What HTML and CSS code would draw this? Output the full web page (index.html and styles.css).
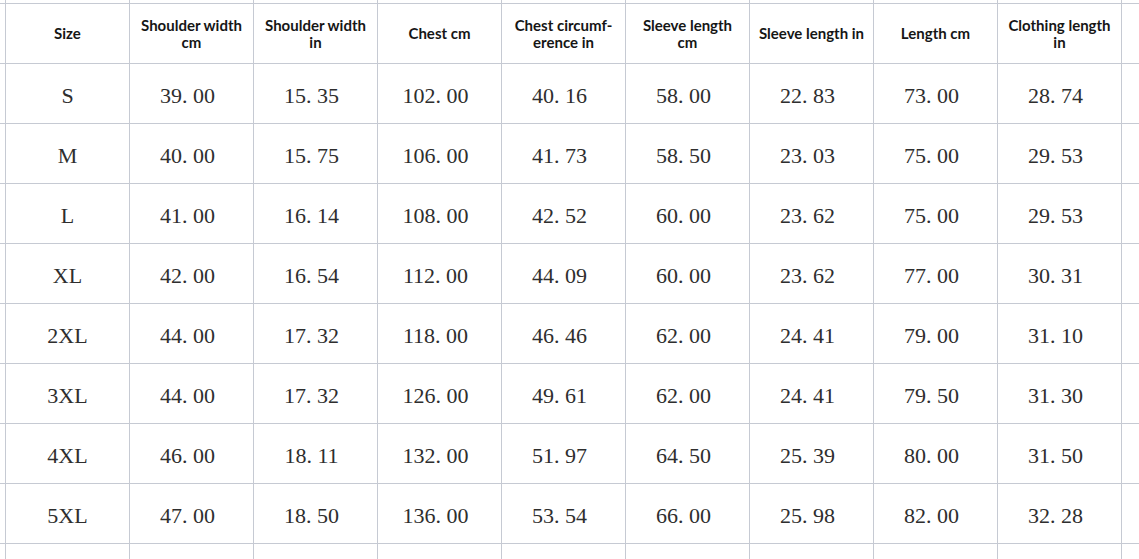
FILE: index.html
```html
<!DOCTYPE html>
<html lang="en">
<head>
<meta charset="utf-8">
<title>Size chart</title>
<link rel="stylesheet" href="styles.css">
</head>
<body>
<div class="sheet">
  <div class="c"></div><div class="c"></div><div class="c"></div><div class="c"></div><div class="c"></div><div class="c"></div><div class="c"></div><div class="c"></div><div class="c"></div><div class="c"></div><div class="c last"></div>

  <div class="c"></div>
  <div class="c h">Size</div>
  <div class="c h">Shoulder width<br>cm</div>
  <div class="c h">Shoulder width<br>in</div>
  <div class="c h">Chest cm</div>
  <div class="c h">Chest circumf-<br>erence in</div>
  <div class="c h">Sleeve length<br>cm</div>
  <div class="c h">Sleeve length in</div>
  <div class="c h">Length cm</div>
  <div class="c h">Clothing length<br>in</div>
  <div class="c last"></div>

  <div class="c"></div>
  <div class="c d">S</div>
  <div class="c d n">39<span class="dot">.</span>00</div>
  <div class="c d n">15<span class="dot">.</span>35</div>
  <div class="c d n">102<span class="dot">.</span>00</div>
  <div class="c d n">40<span class="dot">.</span>16</div>
  <div class="c d n">58<span class="dot">.</span>00</div>
  <div class="c d n">22<span class="dot">.</span>83</div>
  <div class="c d n">73<span class="dot">.</span>00</div>
  <div class="c d n">28<span class="dot">.</span>74</div>
  <div class="c last"></div>

  <div class="c"></div>
  <div class="c d">M</div>
  <div class="c d n">40<span class="dot">.</span>00</div>
  <div class="c d n">15<span class="dot">.</span>75</div>
  <div class="c d n">106<span class="dot">.</span>00</div>
  <div class="c d n">41<span class="dot">.</span>73</div>
  <div class="c d n">58<span class="dot">.</span>50</div>
  <div class="c d n">23<span class="dot">.</span>03</div>
  <div class="c d n">75<span class="dot">.</span>00</div>
  <div class="c d n">29<span class="dot">.</span>53</div>
  <div class="c last"></div>

  <div class="c"></div>
  <div class="c d">L</div>
  <div class="c d n">41<span class="dot">.</span>00</div>
  <div class="c d n">16<span class="dot">.</span>14</div>
  <div class="c d n">108<span class="dot">.</span>00</div>
  <div class="c d n">42<span class="dot">.</span>52</div>
  <div class="c d n">60<span class="dot">.</span>00</div>
  <div class="c d n">23<span class="dot">.</span>62</div>
  <div class="c d n">75<span class="dot">.</span>00</div>
  <div class="c d n">29<span class="dot">.</span>53</div>
  <div class="c last"></div>

  <div class="c"></div>
  <div class="c d">XL</div>
  <div class="c d n">42<span class="dot">.</span>00</div>
  <div class="c d n">16<span class="dot">.</span>54</div>
  <div class="c d n">112<span class="dot">.</span>00</div>
  <div class="c d n">44<span class="dot">.</span>09</div>
  <div class="c d n">60<span class="dot">.</span>00</div>
  <div class="c d n">23<span class="dot">.</span>62</div>
  <div class="c d n">77<span class="dot">.</span>00</div>
  <div class="c d n">30<span class="dot">.</span>31</div>
  <div class="c last"></div>

  <div class="c"></div>
  <div class="c d">2XL</div>
  <div class="c d n">44<span class="dot">.</span>00</div>
  <div class="c d n">17<span class="dot">.</span>32</div>
  <div class="c d n">118<span class="dot">.</span>00</div>
  <div class="c d n">46<span class="dot">.</span>46</div>
  <div class="c d n">62<span class="dot">.</span>00</div>
  <div class="c d n">24<span class="dot">.</span>41</div>
  <div class="c d n">79<span class="dot">.</span>00</div>
  <div class="c d n">31<span class="dot">.</span>10</div>
  <div class="c last"></div>

  <div class="c"></div>
  <div class="c d">3XL</div>
  <div class="c d n">44<span class="dot">.</span>00</div>
  <div class="c d n">17<span class="dot">.</span>32</div>
  <div class="c d n">126<span class="dot">.</span>00</div>
  <div class="c d n">49<span class="dot">.</span>61</div>
  <div class="c d n">62<span class="dot">.</span>00</div>
  <div class="c d n">24<span class="dot">.</span>41</div>
  <div class="c d n">79<span class="dot">.</span>50</div>
  <div class="c d n">31<span class="dot">.</span>30</div>
  <div class="c last"></div>

  <div class="c"></div>
  <div class="c d">4XL</div>
  <div class="c d n">46<span class="dot">.</span>00</div>
  <div class="c d n">18<span class="dot">.</span>11</div>
  <div class="c d n">132<span class="dot">.</span>00</div>
  <div class="c d n">51<span class="dot">.</span>97</div>
  <div class="c d n">64<span class="dot">.</span>50</div>
  <div class="c d n">25<span class="dot">.</span>39</div>
  <div class="c d n">80<span class="dot">.</span>00</div>
  <div class="c d n">31<span class="dot">.</span>50</div>
  <div class="c last"></div>

  <div class="c"></div>
  <div class="c d">5XL</div>
  <div class="c d n">47<span class="dot">.</span>00</div>
  <div class="c d n">18<span class="dot">.</span>50</div>
  <div class="c d n">136<span class="dot">.</span>00</div>
  <div class="c d n">53<span class="dot">.</span>54</div>
  <div class="c d n">66<span class="dot">.</span>00</div>
  <div class="c d n">25<span class="dot">.</span>98</div>
  <div class="c d n">82<span class="dot">.</span>00</div>
  <div class="c d n">32<span class="dot">.</span>28</div>
  <div class="c last"></div>

  <div class="c bot"></div><div class="c bot"></div><div class="c bot"></div><div class="c bot"></div><div class="c bot"></div><div class="c bot"></div><div class="c bot"></div><div class="c bot"></div><div class="c bot"></div><div class="c bot"></div><div class="c bot last"></div>
</div>
</body>
</html>
```
FILE: styles.css
```css
* { box-sizing: border-box; }
html, body { margin: 0; padding: 0; background: #ffffff; }
body { width: 1139px; height: 559px; overflow: hidden; }

.sheet {
  display: grid;
  grid-template-columns: 6px repeat(9, 124px) 1fr;
  grid-template-rows: 4px repeat(9, 60px) 1fr;
  width: 1139px;
  height: 559px;
  background: #ffffff;
}

.c {
  border-right: 1px solid #c6cad3;
  border-bottom: 1px solid #c6cad3;
  display: flex;
  align-items: center;
  justify-content: center;
  text-align: center;
  color: #1c1c1c;
}
.c.last { border-right: none; }
.c.bot { border-bottom: none; }

.h {
  font-family: Lato, "Open Sans", sans-serif;
  font-weight: 700;
  font-size: 15px;
  line-height: 17px;
  padding: 0 1px 0;
  color: #161616;
}

.d {
  font-family: "Liberation Serif", "Times New Roman", serif;
  font-size: 22px;
  line-height: 24px;
  padding-top: 4px;
  color: #2e2e2e;
}

.n { padding-right: 8px; }

.dot {
  display: inline-block;
  width: 11px;
  text-align: left;
}
```
